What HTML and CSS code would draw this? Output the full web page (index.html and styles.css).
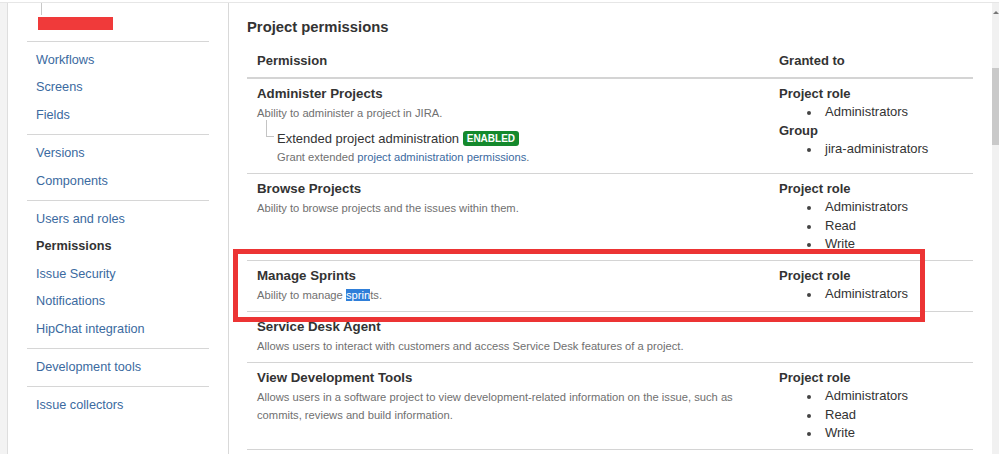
FILE: index.html
```html
<!DOCTYPE html>
<html>
<head>
<meta charset="utf-8">
<link rel="stylesheet" href="styles.css">
</head>
<body>
<div class="frame">
  <div class="strip"></div>
  <nav class="sidebar">
    <div class="sb-top">
      <div class="tree-stem"></div>
      <div class="redacted"></div>
    </div>
    <ul class="nav-group">
      <li><a>Workflows</a></li>
      <li><a>Screens</a></li>
      <li><a>Fields</a></li>
    </ul>
    <ul class="nav-group">
      <li><a>Versions</a></li>
      <li><a>Components</a></li>
    </ul>
    <ul class="nav-group">
      <li><a>Users and roles</a></li>
      <li class="active">Permissions</li>
      <li><a>Issue Security</a></li>
      <li><a>Notifications</a></li>
      <li><a>HipChat integration</a></li>
    </ul>
    <ul class="nav-group">
      <li><a>Development tools</a></li>
    </ul>
    <ul class="nav-group last">
      <li><a>Issue collectors</a></li>
    </ul>
  </nav>
  <main class="main">
    <h2 class="title">Project permissions</h2>
    <table class="perms">
      <thead>
        <tr><th class="c1">Permission</th><th class="c2">Granted to</th></tr>
      </thead>
      <tbody>
        <tr>
          <td>
            <div class="pname">Administer Projects</div>
            <div class="pdesc">Ability to administer a project in JIRA.</div>
            <div class="ext">
              <div class="ext-title">Extended project administration <span class="lozenge">ENABLED</span></div>
              <div class="pdesc">Grant extended <a class="lnk">project administration permissions</a>.</div>
            </div>
          </td>
          <td>
            <div class="gtype">Project role</div>
            <ul class="glist"><li>Administrators</li></ul>
            <div class="gtype">Group</div>
            <ul class="glist"><li>jira-administrators</li></ul>
          </td>
        </tr>
        <tr>
          <td>
            <div class="pname">Browse Projects</div>
            <div class="pdesc">Ability to browse projects and the issues within them.</div>
          </td>
          <td>
            <div class="gtype">Project role</div>
            <ul class="glist"><li>Administrators</li><li>Read</li><li>Write</li></ul>
          </td>
        </tr>
        <tr>
          <td>
            <div class="pname">Manage Sprints</div>
            <div class="pdesc">Ability to manage <span class="sel">sprin</span>ts.</div>
          </td>
          <td>
            <div class="gtype">Project role</div>
            <ul class="glist"><li>Administrators</li></ul>
          </td>
        </tr>
        <tr>
          <td>
            <div class="pname">Service Desk Agent</div>
            <div class="pdesc">Allows users to interact with customers and access Service Desk features of a project.</div>
          </td>
          <td></td>
        </tr>
        <tr>
          <td>
            <div class="pname">View Development Tools</div>
            <div class="pdesc">Allows users in a software project to view development-related information on the issue, such as commits, reviews and build information.</div>
          </td>
          <td>
            <div class="gtype">Project role</div>
            <ul class="glist"><li>Administrators</li><li>Read</li><li>Write</li></ul>
          </td>
        </tr>
      </tbody>
    </table>
  </main>
  <div class="scrollbar">
    <div class="sc-arrow"></div>
    <div class="sc-thumb"></div>
  </div>
</div>
<div class="highlight-box"></div>
</body>
</html>
```
FILE: styles.css
```css
html, body {
  margin: 0;
  padding: 0;
  background: #fff;
}
body {
  width: 999px;
  height: 454px;
  overflow: hidden;
  position: relative;
  font-family: "Liberation Sans", Arial, sans-serif;
  color: #333;
  padding-top: 2px;
  box-sizing: border-box;
}
.frame {
  display: flex;
  height: 452px;
  border-top: 1px solid #e6e6e6;
}
.strip {
  width: 7px;
  background: #f3f3f3;
  border-right: 1px solid #dedede;
  flex: none;
}
.sidebar {
  width: 221px;
  flex: none;
  border-right: 1px solid #d9d9d9;
  padding-left: 19px;
  box-sizing: border-box;
}
.sb-top {
  height: 38px;
  position: relative;
}
.tree-stem {
  margin-left: 14px;
  width: 1px;
  height: 12px;
  background: #c8c8c8;
}
.redacted {
  margin-left: 11px;
  margin-top: 2px;
  width: 75px;
  height: 13px;
  background: #f03a3a;
}
.nav-group {
  list-style: none;
  margin: 0;
  padding: 5px 0 5px 9px;
  width: 182px;
  box-sizing: border-box;
  border-top: 1px solid #d6d6d6;
}
.nav-group li {
  font-size: 12.7px;
  line-height: 27.4px;
  color: #3b6aa0;
}
.nav-group li a {
  color: #3b6aa0;
}
.nav-group li.active {
  color: #333;
  font-weight: bold;
}
.main {
  flex: 1;
  padding: 14px 0 0 18px;
}
.title {
  margin: 0 0 9px 0;
  font-size: 14.8px;
  line-height: 20px;
  font-weight: bold;
  color: #333;
}
.perms {
  border-collapse: collapse;
  width: 726px;
}
.perms th {
  text-align: left;
  font-size: 13px;
  font-weight: bold;
  line-height: 18px;
  padding: 6px 10px 7px;
  border-bottom: 2px solid #d4d4d4;
}
.perms th.c1 {
  width: 502px;
}
.perms td {
  vertical-align: top;
  padding: 6px 10px 7px;
  border-bottom: 1px solid #d4d4d4;
}
.pname {
  font-size: 13.3px;
  font-weight: bold;
  line-height: 18px;
}
.pdesc {
  font-size: 11.2px;
  line-height: 18px;
  color: #707070;
  margin-top: 1px;
}
.lnk {
  color: #3b6aa0;
}
.sel {
  background: #2f7fd9;
  color: #fff;
}
.ext {
  position: relative;
  margin-top: 8px;
  padding-left: 20px;
}
.ext::before {
  content: "";
  position: absolute;
  left: 9px;
  top: -10px;
  width: 7px;
  height: 16px;
  border-left: 1px solid #c4c4c4;
  border-bottom: 1px solid #c4c4c4;
}
.ext-title {
  font-size: 13px;
  line-height: 18px;
  color: #333;
}
.ext .pdesc {
  margin-top: 0;
}
.lozenge {
  display: inline-block;
  background: #14892c;
  color: #fff;
  font-size: 10px;
  font-weight: bold;
  line-height: 15px;
  padding: 0 4px;
  border-radius: 3px;
  vertical-align: 1px;
}
.gtype {
  font-size: 13px;
  font-weight: bold;
  line-height: 18.3px;
}
.glist {
  margin: 0;
  padding-left: 46px;
  list-style: none;
}
.glist li {
  font-size: 13px;
  line-height: 18.3px;
  position: relative;
}
.glist li::before {
  content: "";
  position: absolute;
  left: -18px;
  top: 8px;
  width: 4px;
  height: 4px;
  border-radius: 50%;
  background: #444;
}
.scrollbar {
  width: 7px;
  flex: none;
  background: #f1f1f1;
  margin-left: auto;
  position: relative;
}
.sc-arrow {
  width: 0;
  height: 0;
  margin: 8px auto 0;
  border-left: 3px solid transparent;
  border-right: 3px solid transparent;
  border-bottom: 3px solid #777;
}
.sc-thumb {
  margin-top: 54px;
  height: 77px;
  background: #c9c9c9;
}
.highlight-box {
  position: absolute;
  left: 233px;
  top: 249px;
  width: 692px;
  height: 73px;
  border: 5px solid #ec3434;
  box-sizing: border-box;
}
```
